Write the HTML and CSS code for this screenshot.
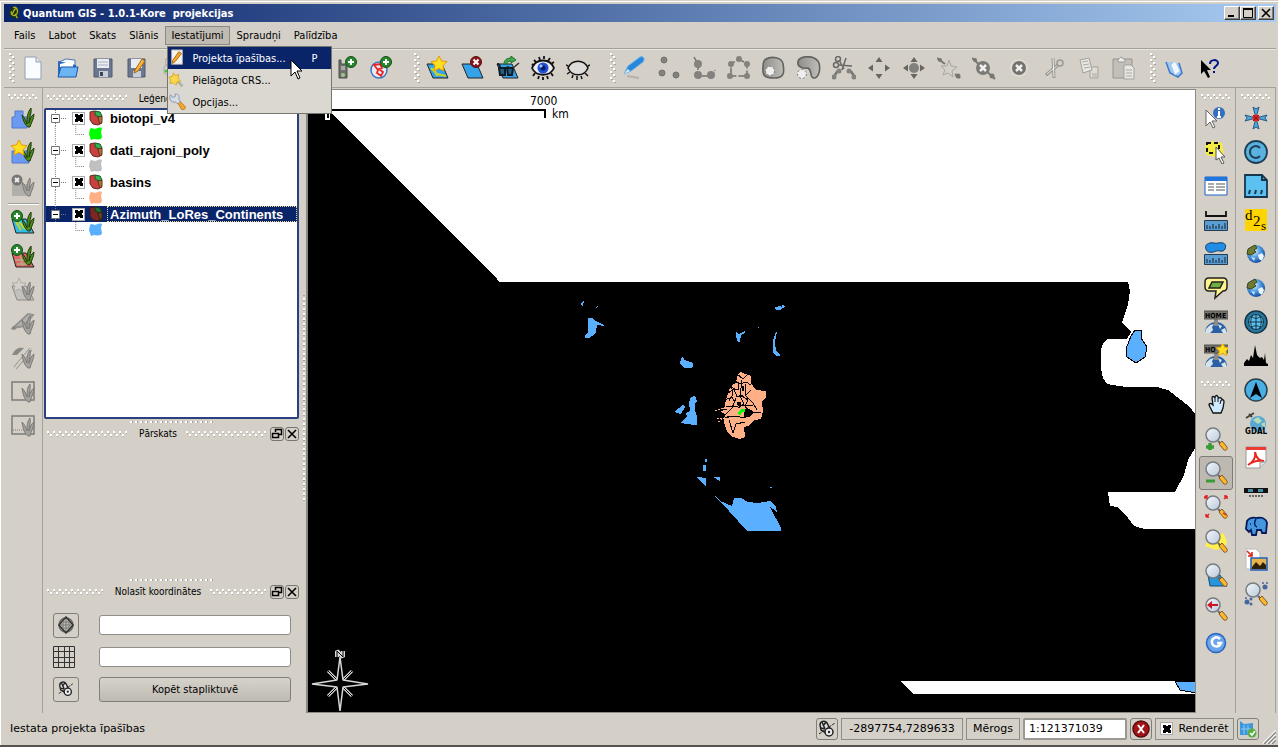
FILE: index.html
```html
<!DOCTYPE html>
<html lang="lv">

<head>
  <meta charset="UTF-8" />
  <meta name="viewport" content="width=device-width, initial-scale=1.0" />
  <title>Quantum GIS - 1.0.1-Kore projekcijas</title>
  <link rel="stylesheet" href="styles.css">
</head>

<body>
  <!-- shared icon parts -->
  <svg class="sprite" aria-hidden="true">
    <defs>
      <linearGradient id="gLens" x1="0" y1="0" x2="1" y2="1">
        <stop offset="0" stop-color="#f4f8fc" /><stop offset="1" stop-color="#b9c9da" />
      </linearGradient>
      <linearGradient id="gGray" x1="0" y1="0" x2="1" y2="0">
        <stop offset="0" stop-color="#8e8d89" /><stop offset="1" stop-color="#c0beb9" />
      </linearGradient>
      <radialGradient id="gEarth" cx="0.4" cy="0.35" r="0.7">
        <stop offset="0" stop-color="#d8f0ff" /><stop offset="0.5" stop-color="#4c9be0" /><stop offset="1" stop-color="#123f9c" />
      </radialGradient>
    </defs>
    <symbol id="grass" viewBox="0 0 24 24">
      <path d="M17 20C13 17 12 12 11 8c3 3 4 6 5 9 0-6 0-11 4-16 1 5-2 10-2 15 1-4 2-7 5-9 0 5-3 9-4 13z" fill="#4f8a1c" stroke="#1d3a0a" />
    </symbol>
    <symbol id="grass-off" viewBox="0 0 24 24">
      <path d="M17 22C13 19 12 14 11 8c3 3 4 6 5 9 0-6 0-9 3-13 1 5-1 8-1 13 1-4 2-7 5-9 0 5-3 9-4 14z" fill="#a3a29e" stroke="#7b7a77" />
    </symbol>
    <symbol id="lens" viewBox="0 0 24 24">
      <path d="M14 14l3 3" stroke="#666" stroke-width="2" />
      <path d="M15 17l3-3 5 6c1 2-1 4-3 3z" fill="#ffb52e" stroke="#7c5a20" />
      <circle cx="9" cy="8" r="7" fill="url(#gLens)" stroke="#777b82" stroke-width="1.5" />
    </symbol>
    <symbol id="plus" viewBox="0 0 24 24">
      <circle cx="6" cy="6" r="5.5" fill="#25882b" stroke="#154e18" />
      <path d="M6 3v6M3 6h6" stroke="#fff" stroke-width="2" />
    </symbol>
    <symbol id="star" viewBox="0 0 24 24">
      <path d="M8 0l2.500 5 5.500.6-4 4 1 5.400-5-2.600L3 15l1-5.400-4-4L5.500 5z" fill="#ffdf1f" stroke="#e59b00" />
    </symbol>
    <symbol id="map-tile" viewBox="0 0 24 24">
      <path d="M1 8h15l6 14H7z" fill="#35a2ea" stroke="#222" />
    </symbol>
    <symbol id="globe" viewBox="0 0 24 24">
      <circle cx="12" cy="12" r="9" fill="url(#gEarth)" />
      <path d="M4 7l7-4 2 3-3 2 2 2-5 3-4-1z" fill="#6d7c32" stroke="#3a4418" />
      <path d="M14 13l4-2 2 3-2 5-3-2z" fill="#eaf5fb" /><path d="M7 15l4 1-1 3z" fill="#cfe6f8" />
    </symbol>
    <symbol id="home" viewBox="0 0 24 24">
      <path d="M1 23c0-7 5-11 11-11s11 4 11 11z" fill="#2b5fa5" />
      <path d="M2 19l4-4 4-1-2 3 1 3-3 3H1zM14 14l4 2-2 3zM17 20l4-2 2 5h-4z" fill="#d5e3ea" />
      <path d="M10 8h4v8h-4z" fill="#8a8a88" />
      <path d="M0 1h24v8H0z" fill="#73736f" stroke="#55554f" />
    </symbol>
    <symbol id="ruler" viewBox="0 0 24 24">
      <path d="M.5 12.500h23v10H.5z" fill="#5a9dd0" stroke="#263a52" />
      <path d="M3 21v-4M6 21v-3M9 21v-5M12 21v-3M15 21v-5M18 21v-3M21 21v-6" stroke="#102338" />
    </symbol>
    <symbol id="mouse" viewBox="0 0 20 20">
      <path d="M3 6c0-4 5-5 7-2l3 6-4 4-5-3z" fill="#ddd" stroke="#222" stroke-width="1.500" />
      <path d="M5 3l3 7M9 3l-3 4M4 9l4 1" stroke="#222" stroke-width="1.500" fill="none" />
      <path d="M2 15L18 4" stroke="#222" stroke-dasharray="3 1" />
      <circle cx="12" cy="13" r="4" fill="#eee" stroke="#222" stroke-width="1.500" /><circle cx="12" cy="13" r="1.200" fill="#222" />
    </symbol>
    <symbol id="layer" viewBox="0 0 16 16">
      <path d="M2 2l4-1 3 1 2 3-1 3 3 2 1 3-4 2-5-1-3-4z" fill="#c9403d" stroke="#6e2020" />
      <path d="M7 1l5 1 2 4-3 1-4-2z" fill="#2fb351" stroke="#1b5a2b" /><path d="M10 7l4-1v6l-2 2-1-3z" fill="#b5733b" stroke="#5c3517" />
    </symbol>
    <symbol id="patch" viewBox="0 0 14 14">
      <path d="M1 2c2-2 3 0 5 0 3-1 5-2 7-1l-1 4 1 5-1 2-4 .5-3-.5-3 1-1-3-1-3z" />
    </symbol>
    <symbol id="grow" viewBox="0 0 24 24">
      <path d="M12 1l3.500 5h-7zM12 23l3.500-5h-7zM1 12l5-3.500v7zM23 12l-5-3.500v7z" fill="#666562" />
    </symbol>
    <symbol id="branch" viewBox="0 0 26 16">
      <path d="M9.500 0v4M9.500 13v3M15 8.500h5" stroke="#777" stroke-dasharray="1 1" />
      <path d="M5.500 4.500h8v8h-8z" fill="#fff" stroke="#777" /><path d="M7 8.500h5" stroke="#000" />
    </symbol>
    <symbol id="twig" viewBox="0 0 42 16">
      <path d="M9.500 0v16M30.500 0v8.500h9" fill="none" stroke="#777" stroke-dasharray="1 1" />
    </symbol>
    <symbol id="twig-last" viewBox="0 0 42 16">
      <path d="M30.500 0v8.500h9" fill="none" stroke="#777" stroke-dasharray="1 1" />
    </symbol>
  </svg>

  <div class="window">
    <header class="titlebar">
      <svg class="app-icon" viewBox="0 0 16 16"><path d="M8 1c5 0 6 4 5 8l-2 3 2 3-5-2C3 13 3 9 3 7c0-3 2-6 5-6z" fill="#17340d" /><path d="M7 2c3-2 5 1 5 4s-2 5-4 5-4-2-3-5M9 9l3 5M11 3c-4 0-3 4-5 6" fill="none" stroke="#b4b51c" stroke-width="1.500" /></svg>
      <h1>Quantum GIS - 1.0.1-Kore&nbsp; projekcijas</h1>
      <div class="window-buttons">
        <button aria-label="Minimizēt"><svg viewBox="0 0 12 10"><path d="M2 8h6" stroke="#000" stroke-width="2" /></svg></button>
        <button aria-label="Maksimizēt"><svg viewBox="0 0 12 10"><path d="M1.500 1v8.500h9V1" fill="none" stroke="#000" /><path d="M1 1h10" stroke="#000" stroke-width="2" /></svg></button>
        <button class="close" aria-label="Aizvērt"><svg viewBox="0 0 12 10"><path d="M2 1l8 8M10 1L2 9" stroke="#000" stroke-width="1.600" /></svg></button>
      </div>
    </header>

    <nav class="menubar">
      <button>Fails</button>
      <button>Labot</button>
      <button>Skats</button>
      <button>Slānis</button>
      <div class="menu-holder">
        <button class="open">Iestatījumi</button>
        <div class="menu">
          <button class="menu-item active">
            <svg viewBox="0 0 20 20"><path d="M4 1h12v16H4z" fill="#f5f5f2" stroke="#aaa" /><path d="M5 13l7-10 3 2-7 9-3 2z" fill="#f9a626" stroke="#a66710" /></svg>
            <span>Projekta īpašības...</span><kbd>P</kbd>
          </button>
          <button class="menu-item">
            <svg viewBox="0 0 20 20"><path d="M8 8l8 9" stroke="#b0aea6" stroke-width="3" /><path d="M6 2l2 3 4-1-1 4 3 3-4 1-1 4-3-3-4 1 1-4-2-3 4-1z" fill="#fbd84a" stroke="#d9a520" /></svg>
            <span>Pielāgota CRS...</span>
          </button>
          <button class="menu-item">
            <svg viewBox="0 0 20 20"><path d="M11 11l2-2 6 6c1 3-2 4-4 3z" fill="#f8a52b" stroke="#b97410" /><path d="M3 2l2 3 3-1V1c4 0 5 3 4 6l2 2-3 3-3-2c-4 1-6-2-6-6z" fill="#d5dde6" stroke="#8390a0" /></svg>
            <span>Opcijas...</span>
          </button>
        </div>
        <svg class="pointer" viewBox="0 0 13 21"><path d="M1 1v16l4-4 3 7 2-1-3-7h5z" fill="#fff" stroke="#000" /></svg>
      </div>
      <button>Spraudņi</button>
      <button>Palīdzība</button>
    </nav>

    <div class="toolbar">
      <div class="grip first"></div>
      <button aria-label="Jauns"><svg viewBox="0 0 24 24"><path d="M4 1h11l5 5v17H4z" fill="#fafcff" stroke="#8ea0b8" /><path d="M15 1v5h5" fill="#dbe6f2" stroke="#8ea0b8" /></svg></button>
      <button aria-label="Atvērt"><svg viewBox="0 0 24 24"><path d="M3 6l7-3 9 1v7H3z" fill="#f4fbff" stroke="#4a78b8" /><path d="M2 5v16h18V9" fill="#2a67bd" /><path d="M4 8l13-3v6H4z" fill="#fff" /><path d="M2 21L5 11h17l-2 10z" fill="#6db4f3" stroke="#1858aa" /></svg></button>
      <button aria-label="Saglabāt"><svg viewBox="0 0 24 24"><path d="M3 3h18v18H3z" fill="#6b7890" stroke="#4c5870" /><path d="M6 3h12v9H6z" fill="#e9edf2" /><path d="M7 6h10M7 9h10" stroke="#a9b2bf" /><path d="M8 15h9v6H8z" fill="#c9cfd8" /><path d="M9 16h3v4H9z" fill="#39445a" /></svg></button>
      <button aria-label="Saglabāt kā"><svg viewBox="0 0 24 24"><path d="M2 3h17v18H2z" fill="#6b7890" stroke="#4c5870" /><path d="M5 3h11v9H5z" fill="#e9edf2" /><path d="M7 15h8v6H7z" fill="#c9cfd8" /><path d="M9 14l7-11 3 2-7 10-4 2z" fill="#fbb33b" stroke="#a66710" /></svg></button>
      <button aria-label="Drukāt"><svg viewBox="0 0 24 24"><path d="M5 3h14v6H5z" fill="#fff" stroke="#999" /><path d="M3 11l3-2h16v10H6l-3-2z" fill="#cfcfcf" stroke="#aaa" /><circle cx="5" cy="15" r="1.500" fill="#3c3" /></svg></button>
      <div class="hidden-gap"></div>
      <div class="grip"></div>
      <button aria-label="Pievienot vektoru slāni"><svg viewBox="0 0 24 24"><use href="#map-tile" /></svg></button>
      <button aria-label="Pievienot rastra slāni"><svg viewBox="0 0 24 24"><use href="#map-tile" /></svg></button>
      <button aria-label="Pievienot PostGIS slāni"><svg viewBox="0 0 24 24"><use href="#map-tile" /></svg></button>
      <button aria-label="GPS rīki"><svg viewBox="0 0 24 24"><path d="M4 4h2v4h6v14H4z" fill="#6f706c" stroke="#4b4c49" /><path d="M6 10h4v4H6z" fill="#a8aaa5" /><circle cx="8" cy="19" r="2" fill="#9fc98c" /><use href="#plus" x="10" /></svg></button>
      <button aria-label="WMS slānis"><svg viewBox="0 0 24 24"><circle cx="9" cy="14" r="8" fill="#e7eaf0" stroke="#3777c4" stroke-width="1.500" /><path d="M4 9l6-1 2 4-3 1 4 3-2 4-4-3 1-3z" fill="none" stroke="#e22" stroke-width="1.800" /><use href="#plus" x="10" /></svg></button>
      <div class="grip"></div>
      <button aria-label="Jauns vektoru slānis"><svg viewBox="0 0 24 24"><use href="#map-tile" /><path d="M5 12l6 6 9 2M8 12l3 8" stroke="#c5d629" stroke-width="2" fill="none" /><use href="#star" x="5" /></svg></button>
      <button aria-label="Noņemt slāni"><svg viewBox="0 0 24 24"><use href="#map-tile" /><circle cx="15" cy="6" r="5.500" fill="#8d1518" stroke="#521012" /><path d="M12.500 3.500l5 5M17.500 3.500l-5 5" stroke="#fff" stroke-width="2" /></svg></button>
      <button aria-label="Pārskata karte"><svg viewBox="0 0 24 24"><use href="#map-tile" /><path d="M8 8c0-4 3-6 7-6V0l5 4-5 3V5c-3 0-4 1-4 3z" fill="#3bab4c" stroke="#276b31" /><path d="M1 8c2 0 3 2 3 4h6l3-1" stroke="#18242f" stroke-width="2" fill="none" /><path d="M3 12h6v7H4zM11 12h6l-1 7h-4z" fill="#205e86" stroke="#111b24" stroke-width="2" /><path d="M17 12l6-5" stroke="#333" stroke-width="1.500" /></svg></button>
      <button aria-label="Rādīt visus"><svg viewBox="0 0 24 24"><path d="M5 6L3 4M9 4L8 1M13 3V0M17 5l2-3M20 8l3-2M4 17l-2 3M8 20l-1 3M12 21v3M16 20l1 3M20 17l2 3M1 8l2 2" stroke="#111" stroke-width="1.800" /><path d="M1 12C5 2 19 2 23 12 19 21 5 21 1 12z" fill="#ececec" stroke="#111" stroke-width="1.800" /><circle cx="12" cy="12" r="5.500" fill="#1c50d4" /><circle cx="12" cy="12" r="2.500" fill="#041a66" /><circle cx="10" cy="10" r="1.500" fill="#b3ccff" /></svg></button>
      <button aria-label="Paslēpt visus"><svg viewBox="0 0 24 24"><path d="M4 16l-3 2M7 19l-1 3M11 20v4M15 20l1 3M19 17l3 3M2 10L0 9M22 10l2-1" stroke="#111" stroke-width="1.500" /><path d="M2 12C6 3 18 3 22 12c-4 9-16 9-20 0z" fill="#dedcd8" stroke="#111" stroke-width="1.500" /></svg></button>
      <div class="grip"></div>
      <button aria-label="Rediģēt"><svg viewBox="0 0 24 24"><path d="M5 20l12 2" stroke="#b5b2ab" stroke-width="2" /><path d="M2 18l4-8L18 1c4-1 5 2 3 5L9 15z" fill="#2987da" stroke="#5fb1f0" /><path d="M2 18l4-5 2 2z" fill="#e8edf2" /></svg></button>
      <button aria-label="Punkts" disabled><svg viewBox="0 0 24 24"><g fill="#83827e" stroke="#72716e"><circle cx="7" cy="4" r="3" /><circle cx="5" cy="17" r="3" /><circle cx="19" cy="19" r="3" /></g></svg></button>
      <button aria-label="Līnija" disabled><svg viewBox="0 0 24 24"><path d="M2 1l4 7v12h14l3-6" fill="none" stroke="#72716e" stroke-width="1.500" stroke-dasharray="6 2" /><g fill="#83827e"><circle cx="6" cy="8" r="4" /><circle cx="6" cy="19" r="4" /><circle cx="19" cy="19" r="4" /></g></svg></button>
      <button aria-label="Poligons" disabled><svg viewBox="0 0 24 24"><path d="M12 3l8 5v12H4V8z" fill="none" stroke="#72716e" stroke-width="1.500" stroke-dasharray="6 2" /><g fill="#83827e"><circle cx="12" cy="3" r="3" /><circle cx="20" cy="8" r="3" /><circle cx="4" cy="8" r="3" /><circle cx="3" cy="20" r="3" /><circle cx="20" cy="20" r="3" /></g></svg></button>
      <button aria-label="Gredzens" disabled><svg viewBox="0 0 24 24"><path d="M4 3c5-3 16-2 17 5 2 10 0 14-9 14S0 20 1 11c0-4 1-7 3-8z" fill="url(#gGray)" stroke="#63625f" stroke-width="1.600" /><circle cx="8" cy="15" r="4.500" fill="#eee" stroke="#777" stroke-dasharray="2 2" /></svg></button>
      <button aria-label="Sala" disabled><svg viewBox="0 0 24 24"><path d="M4 2c7-3 15-1 18 5 2 8-1 15-5 15-5 0-1-7-6-10C6 13 0 11 1 6c0-2 1-3 3-4z" fill="url(#gGray)" stroke="#63625f" stroke-width="1.600" /><circle cx="5" cy="18" r="4.500" fill="#eee" stroke="#777" stroke-dasharray="2 2" /></svg></button>
      <button aria-label="Sadalīt" disabled><svg viewBox="0 0 24 24"><path d="M2 22c1-4 3-7 6-8M22 21c-1-4-3-6-6-7" fill="none" stroke="#777673" stroke-width="2.500" /><circle cx="2" cy="21" r="2.500" fill="#83827e" /><circle cx="7" cy="15" r="2.500" fill="#83827e" /><circle cx="17" cy="15" r="2.500" fill="#83827e" /><circle cx="22" cy="21" r="2.500" fill="#83827e" /><path d="M7 4l5 9M6 9l14 1M10 14l4-12" stroke="#696865" stroke-width="1.500" /><circle cx="6" cy="3" r="2.500" fill="none" stroke="#696865" stroke-width="1.500" /><circle cx="4" cy="9" r="2.500" fill="none" stroke="#696865" stroke-width="1.500" /></svg></button>
      <button aria-label="Pārvietot" disabled><svg viewBox="0 0 24 24"><use href="#grow" /></svg></button>
      <button aria-label="Pārvietot virsotni" disabled><svg viewBox="0 0 24 24"><use href="#grow" /><circle cx="12" cy="12" r="5" fill="#81807c" /></svg></button>
      <button aria-label="Pievienot virsotni" disabled><svg viewBox="0 0 24 24"><path d="M0 2l8 6M18 18l5 4" stroke="#777673" stroke-width="2" /><circle cx="3" cy="4" r="2" fill="#777673" /><circle cx="21" cy="20" r="2.500" fill="#777673" /><path d="M12 4l2 6 6 1-5 4 1 6-5-4-5 2 2-5-4-4h6z" fill="#d4d0c9" stroke="#a8a6a1" /></svg></button>
      <button aria-label="Dzēst virsotni" disabled><svg viewBox="0 0 24 24"><path d="M0 2l23 21" stroke="#777673" stroke-width="2" /><circle cx="3" cy="4" r="2" fill="#777673" /><circle cx="20" cy="20" r="2.500" fill="#777673" /><circle cx="11" cy="12" r="7" fill="#7b7a76" /><path d="M8 9l6 6M14 9l-6 6" stroke="#f0f0ee" stroke-width="2.500" /></svg></button>
      <button aria-label="Dzēst" disabled><svg viewBox="0 0 24 24"><circle cx="12" cy="12" r="9" fill="#dedbd4" /><circle cx="12" cy="12" r="7" fill="#73726e" /><path d="M9 9l6 6M15 9l-6 6" stroke="#f0f0ee" stroke-width="2.500" /></svg></button>
      <button aria-label="Izgriezt" disabled><svg viewBox="0 0 24 24"><path d="M11 2l1 20M16 9L4 19" stroke="#989690" stroke-width="3" /><path d="M11 2l1 19M16 9L5 18" stroke="#efede8" /><circle cx="18" cy="7" r="3" fill="none" stroke="#9c9a95" stroke-width="1.500" /></svg></button>
      <button aria-label="Kopēt" disabled><svg viewBox="0 0 24 24"><path d="M13 11h8v11h-8z" fill="#dfdcd6" stroke="#a3a19b" /><path d="M3 4l9-2 3 12-9 3z" fill="#e9e7e1" stroke="#a3a19b" /><path d="M5 6l6-1M6 9l6-1M7 12l6-1M15 18h5M15 20h5" stroke="#aaa8a2" /></svg></button>
      <button aria-label="Ielīmēt" disabled><svg viewBox="0 0 24 24"><path d="M1 3h19v19H1z" fill="#c2bfb9" stroke="#96948f" /><path d="M6 4l3-3 4 3v2H6z" fill="#eee" stroke="#999" /><path d="M12 9h7l3 3v11H12z" fill="#e9e7e1" stroke="#a3a19b" /><path d="M14 14h6M14 17h6M14 20h6" stroke="#aaa8a2" /></svg></button>
      <div class="grip short"></div>
      <button class="book" aria-label="Palīdzība"><svg viewBox="0 0 24 24"><path d="M4 6l4 11 8 4 4-4-3-10" fill="#9cc6f1" stroke="#3b78cf" stroke-width="1.500" /><path d="M9 9l4-4 5 10-5 4z" fill="#f1f7fd" stroke="#b8d1ea" /></svg></button>
      <button aria-label="Kas šis ir"><svg viewBox="0 0 24 24"><path d="M4 4v14l3-3 4 7 2-1-3-7h4z" fill="#000" /><path d="M13 8c0-5 8-5 8-1 0 3-4 3-4 6M17 15v2" stroke="#001489" stroke-width="2" fill="none" /></svg></button>
    </div>

    <main class="workspace">
      <div class="side-toolbar left">
        <div class="grip-h"></div>
        <button aria-label="Jauns GRASS mapset"><svg viewBox="0 0 24 24"><path d="M4 5h8v6h4v11H1V11h3z" fill="#6c9af0" stroke="#5079cc" /><use href="#grass" y="1" /></svg></button>
        <button aria-label="Atvērt mapset"><svg viewBox="0 0 24 24"><path d="M1 11h17v12H1z" fill="#6c9af0" stroke="#5079cc" /><use href="#grass" y="1" /><use href="#star" /></svg></button>
        <button aria-label="Aizvērt mapset" disabled><svg viewBox="0 0 24 24"><path d="M1 10h18v12H1z" fill="#b1afaa" /><use href="#grass-off" /><circle cx="6" cy="6" r="5.500" fill="#777673" /><path d="M4 4l4 4M8 4L4 8" stroke="#eee" stroke-width="2" /></svg></button>
        <hr>
        <button aria-label="Pievienot GRASS vektoru"><svg viewBox="0 0 24 24"><path d="M1 9h14l8 14H5z" fill="#35bce4" stroke="#222" /><path d="M5 12l5 8M8 12l6 7" stroke="#c5d629" stroke-width="2" /><use href="#grass" y="1" /><use href="#plus" /></svg></button>
        <button aria-label="Pievienot GRASS rastru"><svg viewBox="0 0 24 24"><path d="M1 9h14l8 14H5z" fill="#e8646b" stroke="#222" /><path d="M4 16h14M6 20h14M9 11l3 11" stroke="#b6a27e" stroke-width="2" /><use href="#grass" y="1" /><use href="#plus" /></svg></button>
        <button aria-label="Jauns GRASS vektors" disabled><svg viewBox="0 0 24 24"><path d="M1 8h14l8 14H6z" fill="#c3c1bc" stroke="#8b8a86" /><path d="M8 0l2 5h5l-3 4 1 5-5-3-5 2 1-5-3-3h5z" fill="#d4d1ca" stroke="#b0aea9" /><use href="#grass-off" /></svg></button>
        <button aria-label="Rediģēt GRASS" disabled><svg viewBox="0 0 24 24"><path d="M2 16L17 2l5 1-9 11z" fill="#b3b2ae" stroke="#94938f" stroke-width="2" /><circle cx="3" cy="16" r="2" fill="#888" /><use href="#grass-off" /></svg></button>
        <button aria-label="GRASS rīki" disabled><svg viewBox="0 0 24 24"><path d="M4 22L20 3" stroke="#989793" stroke-width="4" /><path d="M4 22L20 3" stroke="#d6d3cd" stroke-width="2" /><path d="M1 9c3-6 6-8 12-7L6 9z" fill="#8a8985" /><use href="#grass-off" /></svg></button>
        <button aria-label="GRASS reģions" disabled><svg viewBox="0 0 24 24"><path d="M1 2h22v18H1z" fill="none" stroke="#7c7b78" stroke-width="1.500" /><use href="#grass-off" /></svg></button>
        <button aria-label="Rediģēt reģionu" disabled><svg viewBox="0 0 24 24"><path d="M1 2h22v18H1z" fill="none" stroke="#7c7b78" stroke-width="1.500" /><path d="M2 16h20" stroke="#7c7b78" stroke-dasharray="1 1" /><use href="#grass-off" /></svg></button>
      </div>

      <aside class="docks">
        <section class="dock legend">
          <div class="dock-title"><i class="grip-h"></i><h2>Leģenda</h2><i class="grip-h"></i>
            <button aria-label="Atdalīt"><svg viewBox="0 0 12 12"><path d="M4.500 4V1.500h6v5H8M1.500 5.500h6v4h-6z" fill="none" stroke="#000" stroke-width="1.500" /></svg></button>
            <button aria-label="Aizvērt"><svg viewBox="0 0 12 12"><path d="M2 2l8 8M10 2l-8 8" stroke="#000" stroke-width="1.600" /></svg></button>
          </div>
          <ul class="tree">
            <li class="row"><svg class="branch"><use href="#branch" /></svg><input type="checkbox" id="l1" checked><svg class="layer"><use href="#layer" /></svg><label for="l1">biotopi_v4</label></li>
            <li class="row"><svg class="twig"><use href="#twig" /></svg><svg class="patch green"><use href="#patch" /></svg></li>
            <li class="row"><svg class="branch"><use href="#branch" /></svg><input type="checkbox" id="l2" checked><svg class="layer"><use href="#layer" /></svg><label for="l2">dati_rajoni_poly</label></li>
            <li class="row"><svg class="twig"><use href="#twig" /></svg><svg class="patch gray"><use href="#patch" /></svg></li>
            <li class="row"><svg class="branch"><use href="#branch" /></svg><input type="checkbox" id="l3" checked><svg class="layer"><use href="#layer" /></svg><label for="l3">basins</label></li>
            <li class="row"><svg class="twig"><use href="#twig" /></svg><svg class="patch peach"><use href="#patch" /></svg></li>
            <li class="row selected"><svg class="branch"><use href="#branch" /></svg><input type="checkbox" id="l4" checked><svg class="layer"><use href="#layer" /></svg><label for="l4">Azimuth_LoRes_Continents</label></li>
            <li class="row"><svg class="twig"><use href="#twig-last" /></svg><svg class="patch blue"><use href="#patch" /></svg></li>
          </ul>
        </section>
        <div class="splitter"></div>
        <section class="dock overview">
          <div class="dock-title"><i class="grip-h"></i><h2>Pārskats</h2><i class="grip-h"></i>
            <button aria-label="Atdalīt"><svg viewBox="0 0 12 12"><path d="M4.500 4V1.500h6v5H8M1.500 5.500h6v4h-6z" fill="none" stroke="#000" stroke-width="1.500" /></svg></button>
            <button aria-label="Aizvērt"><svg viewBox="0 0 12 12"><path d="M2 2l8 8M10 2l-8 8" stroke="#000" stroke-width="1.600" /></svg></button>
          </div>
        </section>
        <div class="splitter"></div>
        <section class="dock coords">
          <div class="dock-title"><i class="grip-h"></i><h2>Nolasīt koordinātes</h2><i class="grip-h"></i>
            <button aria-label="Atdalīt"><svg viewBox="0 0 12 12"><path d="M4.500 4V1.500h6v5H8M1.500 5.500h6v4h-6z" fill="none" stroke="#000" stroke-width="1.500" /></svg></button>
            <button aria-label="Aizvērt"><svg viewBox="0 0 12 12"><path d="M2 2l8 8M10 2l-8 8" stroke="#000" stroke-width="1.600" /></svg></button>
          </div>
          <div class="coord-form">
            <button class="square" aria-label="CRS"><svg viewBox="0 0 18 18"><circle cx="9" cy="9" r="7" fill="#c2bfb8" stroke="#666" stroke-width="1.500" /><path d="M9 1l7 8-7 8-7-8z" fill="none" stroke="#333" stroke-width="1.500" /><path d="M6 6h6v6H6zM9 3v12M3 9h12" fill="none" stroke="#777" /></svg></button>
            <input type="text" aria-label="Ģeogrāfiskās koordinātes">
            <svg class="grid-icon" viewBox="0 0 22 22"><path d="M.5.5h21v21H.5zM5.500 0v22M11.500 0v22M16.500 0v22M0 5.500h22M0 11.500h22M0 16.500h22" fill="none" stroke="#333" /></svg>
            <input type="text" aria-label="Kartes koordinātes">
            <button class="square" aria-label="Sekot pelei"><svg viewBox="0 0 20 20"><use href="#mouse" /></svg></button>
            <button class="copy">Kopēt stapliktuvē</button>
          </div>
        </section>
      </aside>

      <div class="v-splitter"></div>

      <div class="map">
        <svg viewBox="308 90 887 622" preserveAspectRatio="xMinYMin slice" shape-rendering="crispEdges">
          <path fill="#000" d="M308 89L500 282H1128L1130 291L1128 305L1122 322L1131 332L1127 339H1107L1103 343L1101 350V368L1103 378L1107 384L1126 387H1157L1168 390L1190 407L1195 414V448L1188 460L1184 475L1175 492H1108L1110 506L1118 507L1128 518L1134 526L1145 529H1300V720H308z" />
          <path fill="#fff" d="M900 681h400v13H913z" />
          <path fill="#5ab0ff" stroke="#000" d="M1175 681l5 9 16 3v-12z" />
          <path fill="#5ab0ff" stroke="#000" d="M1135 330h6v8l6 9-2 10-9 6-9-6-1-8 5-13z" />
          <!-- lakes -->
          <g fill="#5ab0ff">
            <path d="M588 318h4l4 3 8 4v1l-7-1-1 7-4 4-3 2h-4v-3l3-3zM581 303l3-3v2l-2 5zM595 308l4-4-2 4zM774 308l5-2 3 1 1-3 2 3-5 3h-4zM736 332l3 2 6-3v2l-4 2-1 7h-2l-2-5zM776 332l-3 9v11l3 4h4v-2l-4-3-1-9 2-10zM681 359l2-3 1 4 4 1 5 2v4l-3 1h-6l-4-4zM695 396l-4 1-2 5 1 9-5 3 3 2-8 7 14 2h3v-9l-2-5v-7l2-3zM674 412l9-7 2 2-4 7zM705 459h2v3h-2zM703 465h3v6h-3zM697 477l9 1v9zM713 477h7v4zM715 496l6 6-3-2zM770 487h2v1h-2zM758 327h1v1h-1z" />
            <path d="M720 501l12 5 2-8h7l7 4 10 1 12-2 6 6 1 6-4-4-3-2 11 21v3h-34z" />
          </g>
          <!-- basins -->
          <path fill="#ffaf85" d="M740 372l3 1 8 3v7l5 7 10 1v6l-4 5 1 9-2 8-7 1-4 5-6 2 1 10-6 2-8-3-4-4-3-10 1-8-4-2 4-6 1-7 4-11 5-8z" />
          <path fill="none" stroke="#000" d="M737 374l6 5 4-4M733 380l7 4 6-2 5 3M730 387l8 3 1-8M728 393l6-4 3 8 5-2 6 6M725 400l7-3 3 6M736 398l-4 10-7 7M742 380l-2 16 4 8-6 4M746 384l-1 11 8 8 4 7M751 390l-6 6M726 407l12-1 15-1M724 418l10-2 11 2 8-6 8 1M729 420l4 13 3-9 9-2M731 384l2 10-4 7M740 396l8 3-3 8 8 5M716 421l12-5 10 1M719 411l8-2" />
          <path fill="#000" d="M733 374l4 4-1 5-5 3zM744 409h5l4 4-4 4h-5zM742 386h2v5h-2zM737 402h4v3h-4z" />
          <path fill="none" stroke="#ffaf85" stroke-dasharray="2 1" d="M715 411l12-4M717 419l11-1M718 422l9-6" />
          <path fill="#0f0" d="M738 413l3-4h4v3h-3l-2 4z" />
          <!-- scale bar -->
          <path fill="none" stroke="#000" stroke-width="2" d="M328 118v-8h217v8" />
          <path fill="#fff" stroke="#fff" d="M325.500 113.500h4v6h-4z" /><path d="M327 113h2v5h-2z" fill="#000" />
          <text x="530" y="105">7000</text>
          <text x="552" y="118">km</text>
          <!-- north arrow -->
          <g shape-rendering="auto" fill="#000" stroke="#d8d8d8" stroke-linejoin="bevel">
            <path d="M328 671l9 9M352 671l-9 9M328 696l9-9M352 696l-9-9" stroke-width="3" />
            <path d="M328 671l9 9M352 671l-9 9M328 696l9-9M352 696l-9-9" stroke="#000" />
            <path d="M340 657l3 23 25 4-25 3-3 24-3-24-25-3 25-4z" stroke-width="1.500" />
            <path d="M337 657v-6l6 6v-6" stroke-width="4" fill="none" /><path d="M337 657v-6l6 6v-6" stroke="#000" fill="none" />
          </g>
        </svg>
      </div>

      <div class="side-toolbar right">
        <div class="grip-h"></div>
        <button aria-label="Identificēt"><svg viewBox="0 0 24 24"><circle cx="15" cy="7" r="6" fill="#356fc1" /><path d="M15 5v6M15 2v2M13 11h4" stroke="#fff" stroke-width="2" /><path d="M2 4v16l4-4 3 6 2-1-3-6h5z" fill="#fff" stroke="#666" /></svg></button>
        <button aria-label="Atlasīt"><svg viewBox="0 0 24 24"><path d="M1 5l7-4 10 2 2 11-8 3L2 15z" fill="#f5ec43" /><path d="M3 3h12v10H3z" fill="none" stroke="#111" stroke-width="2" stroke-dasharray="4 3" /><path d="M12 7v13l3-2 3 6 2-1-3-6h4z" fill="#fff" stroke="#555" /></svg></button>
        <button aria-label="Atribūtu tabula"><svg viewBox="0 0 24 24"><path d="M1 3h22v18H1z" fill="#fff" stroke="#1e63c2" /><path d="M1 3h22v4H1z" fill="#2474de" /><path d="M4 10h6M4 13h6M4 16h6M12 10h9M12 13h9M12 16h9" stroke="#555" stroke-width="1.200" /></svg></button>
        <button aria-label="Mērīt līniju"><svg viewBox="0 0 24 24"><path d="M2 3v5h20V3" fill="none" stroke="#111" stroke-width="1.800" /><use href="#ruler" /></svg></button>
        <button aria-label="Mērīt laukumu"><svg viewBox="0 0 24 24"><path d="M6 1c3-1 5 1 8 0 6-1 9 1 7 6-2 4-6 1-9 2-4 2-9 2-10-2-1-3 0-5 4-6z" fill="#228de6" stroke="#123d66" /><use href="#ruler" /></svg></button>
        <button aria-label="Kartes padomi"><svg viewBox="0 0 24 24"><path d="M5 2h14c3 0 4 1 4 4v5c0 3-1 4-4 4l-8 7 1-7H5c-3 0-4-1-4-4V6c0-3 1-4 4-4z" fill="#fff38c" stroke="#222" stroke-width="1.500" /><path d="M8 6h11l-3 6H5z" fill="#6eae43" stroke="#222" stroke-width="1.500" /></svg></button>
        <button aria-label="Jauna grāmatzīme"><svg viewBox="0 0 24 24"><use href="#home" /><text class="home-text" x="1" y="8">HOME</text></svg></button>
        <button aria-label="Grāmatzīmes"><svg viewBox="0 0 24 24"><use href="#home" /><text class="home-text" x="1" y="8">HO</text><use href="#star" x="12" y="-1" width="20" height="20" /></svg></button>
        <div class="grip-h mid"></div>
        <button aria-label="Pārbīdīt"><svg viewBox="0 0 24 24"><path d="M9 20L5 12c0-2 2-2 4 0L8 5c0-2 2-2 3 0V4c1-2 2-2 3 0l1 1c1-1 3 0 3 2 1-1 2 0 2 2l-1 6-2 5z" fill="#cfeaff" stroke="#111" stroke-width="1.300" /><path d="M11 5v4M14 5v4M17 7l-1 4" stroke="#111" /></svg></button>
        <button aria-label="Tuvināt"><svg viewBox="0 0 24 24"><use href="#lens" /><path d="M6 16v7M2 20h8" stroke="#389b35" stroke-width="3.500" /></svg></button>
        <button class="pressed" aria-label="Tālināt"><svg viewBox="0 0 24 24"><use href="#lens" /><path d="M2 20h9" stroke="#389b35" stroke-width="3" /></svg></button>
        <button aria-label="Rādīt visu"><svg viewBox="0 0 24 24"><use href="#lens" /><path d="M1 1l3 3M23 1l-3 3M2 22l3-3M22 20l-3-2M1 1h3M1 1v3M23 1h-3M23 1v3M2 22v-3M2 22h3" stroke="#e02020" stroke-width="1.500" /></svg></button>
        <button aria-label="Tuvināt atlasei"><svg viewBox="0 0 24 24"><path d="M8 3l12 2 3 8-3 6-8 2-11-4z" fill="#fff04c" /><use href="#lens" /></svg></button>
        <button aria-label="Tuvināt slānim"><svg viewBox="0 0 24 24"><path d="M4 12h12l7 11H6z" fill="#2695dc" stroke="#124c75" /><use href="#lens" /></svg></button>
        <button aria-label="Iepriekšējais skats"><svg viewBox="0 0 24 24"><use href="#lens" /><path d="M3 8l5-4v3h6v2H8v3z" fill="#cc1521" /></svg></button>
        <button aria-label="Atsvaidzināt"><svg viewBox="0 0 24 24"><circle cx="12" cy="12" r="9.500" fill="#6aa4ea" stroke="#2966be" stroke-width="1.500" /><path d="M16 8c-4-4-9 0-8 4s7 5 9 0h-4" fill="none" stroke="#fff" stroke-width="2.500" /></svg></button>
      </div>

      <div class="side-toolbar plugins">
        <div class="grip-h"></div>
        <button aria-label="Koordinātu ieguve"><svg viewBox="0 0 24 24"><path d="M12 12L9 1l3 2 3-2zM12 12l11-3-2 3 2 3zM12 12l3 11-3-2-3 2zM12 12L1 15l2-3-2-3z" fill="#4fa6df" stroke="#275c85" /><circle cx="12" cy="12" r="3.500" fill="#e32424" /><path d="M9 9l6 6M15 9l-6 6" stroke="#8a1111" /></svg></button>
        <button aria-label="Autortiesības"><svg viewBox="0 0 24 24"><circle cx="12" cy="12" r="11" fill="#5bb1df" stroke="#1d3f56" stroke-width="1.800" /><path d="M16 8c-4-4-10-1-10 4s6 8 10 4" fill="none" stroke="#1d3f56" stroke-width="2" /></svg></button>
        <button aria-label="Atdalīts teksts"><svg viewBox="0 0 24 24"><path d="M1 1h17l5 5v17H1z" fill="#5cc0f0" stroke="#17374c" stroke-width="1.800" /><path d="M18 1v5h5M6 16l-1 4M12 16l-1 4M18 16l-1 4" fill="none" stroke="#17374c" stroke-width="2" /></svg></button>
        <button aria-label="dxf2shp"><svg viewBox="0 0 24 24"><path d="M1 1h22v22H1z" fill="#ffd400" /><text class="dxf" x="1" y="12">d</text><text class="dxf" x="9" y="18">2</text><text class="dxf small" x="17" y="22">s</text></svg></button>
        <button aria-label="GeoRef"><svg viewBox="0 0 24 24"><use href="#globe" /></svg></button>
        <button aria-label="Globuss"><svg viewBox="0 0 24 24"><use href="#globe" /></svg></button>
        <button aria-label="Tīkls"><svg viewBox="0 0 24 24"><circle cx="12" cy="12" r="11" fill="#28789f" stroke="#173344" stroke-width="1.500" /><circle cx="12" cy="12" r="7.500" fill="#5bc1ef" stroke="#173344" /><path d="M4 12h16M12 4v16M7 6c3 3 7 3 10 0M7 18c3-3 7-3 10 0M9 5c-3 4-3 10 0 14M15 5c3 4 3 10 0 14" fill="none" stroke="#173344" /></svg></button>
        <button aria-label="Histogramma"><svg viewBox="0 0 24 24"><path d="M0 22v-3l3-4 2 2 2-6 2 3 2-13 2 10 3 3 2-1 2 3 1-7 1 10 2 1v2z" fill="#000" /></svg></button>
        <button aria-label="Ziemeļu bulta"><svg viewBox="0 0 24 24"><circle cx="12" cy="12" r="11" fill="#49afe4" stroke="#29414e" stroke-width="1.500" /><path d="M12 4l6 16-6-4-6 4z" fill="#000" /></svg></button>
        <button aria-label="GDAL"><svg viewBox="0 0 24 24"><circle cx="14" cy="12" r="8" fill="#58a8d2" /><path d="M9 8l5-3 4 4-4 3zM17 12l4-2v6z" fill="#b6dcb4" /><path d="M2 6l8-5M5 2l3 3" stroke="#444" stroke-width="2" /><text class="gdal" x="1" y="22">GDAL</text></svg></button>
        <button aria-label="PDF"><svg viewBox="0 0 24 24"><path d="M2 1h20v15l-6 6H2z" fill="#fff" stroke="#999" /><path d="M2 1h20v3H2z" fill="#ee3b32" /><path d="M4 19c5-3 8-8 7-13 1 5 4 9 9 9-6-1-11 0-16 4" fill="none" stroke="#e8281e" stroke-width="2" /><path d="M16 22v-6h6" fill="#ddd" stroke="#999" /></svg></button>
        <button aria-label="Mēroga josla"><svg viewBox="0 0 24 24"><path d="M0 8h24v5H0z" fill="#111" /><path d="M4 9h5v3H4zM14 9h5v3h-5z" fill="#448ba6" /><path d="M5 16h15" stroke="#666" stroke-width="2" stroke-dasharray="2 1" /></svg></button>
        <button aria-label="PostGIS SPIT"><svg viewBox="0 0 24 24"><path d="M3 7c2-3 6-4 10-3 5-1 9 1 10 5l-1 10h-4l-1-3h-4l-1 5H8l-1-5-2 2-3-3z" fill="#4496df" stroke="#05195b" stroke-width="1.800" /><path d="M12 5c-2 3-2 7 1 8M6 10h1" stroke="#05195b" stroke-width="1.500" fill="none" /></svg></button>
        <button aria-label="Ātrā druka"><svg viewBox="0 0 24 24"><path d="M2 1h10l4 4v16H2z" fill="#fff" stroke="#bbb" /><path d="M3 3l4 4M8 4v4H4" stroke="#d21" stroke-width="1.600" fill="none" /><path d="M7 10h16v12H7z" fill="#e8b54c" stroke="#215fc0" stroke-width="1.500" /><path d="M8 19l4-5 4 4 3-4 3 3v4H8z" fill="#2d2108" /></svg></button>
        <button aria-label="WFS"><svg viewBox="0 0 24 24"><use href="#lens" /><g fill="#4566a0"><circle cx="21" cy="5" r="2.500" /><circle cx="19" cy="1" r="1" /><circle cx="23" cy="1" r="1" /><circle cx="3" cy="20" r="2.500" /><circle cx="7" cy="17" r="1.500" /><circle cx="7" cy="22" r="1.500" /><circle cx="2" cy="16" r="1" /></g></svg></button>
      </div>
    </main>

    <footer class="statusbar">
      <p class="message">Iestata projekta īpašības</p>
      <button class="status-button" aria-label="Pele"><svg viewBox="0 0 20 20"><use href="#mouse" /></svg></button>
      <output class="cell coord">-2897754,7289633</output>
      <label class="cell scale" for="scale">Mērogs</label>
      <input id="scale" type="text" value="1:121371039">
      <button class="status-button" aria-label="Apturēt"><svg viewBox="0 0 20 20"><circle cx="10" cy="10" r="8" fill="#a51418" stroke="#550c0e" stroke-width="1.500" /><path d="M7 6l6 8M13 6l-6 8" stroke="#fff" stroke-width="2" /></svg></button>
      <label class="cell render" for="render"><input id="render" type="checkbox" checked>Renderēt</label>
      <button class="status-button" aria-label="Projekcija"><svg viewBox="0 0 20 20"><path d="M2 2l4 3 9-1v12H2z" fill="#3d97dc" /><path d="M3 10h10M6 6v9M10 6v9" stroke="#8ccbf2" /><circle cx="14" cy="14" r="4.500" fill="#5bad43" /><path d="M12 14l2 2 3-4" fill="none" stroke="#fff" stroke-width="1.500" /></svg></button>
      <svg class="size-grip" viewBox="0 0 14 14"><path d="M1 14L14 1M5 14l9-9M9 14l5-5" stroke="#fff" stroke-width="2" /><path d="M2 14L14 2M6 14l8-8M10 14l4-4" stroke="#8a8882" stroke-width="1.500" /></svg>
    </footer>
  </div>
</body>

</html>
```
FILE: styles.css
```css
* {
  box-sizing: border-box;
}

body {
  margin: 0;
  font-family: "DejaVu Sans Condensed", "DejaVu Sans", sans-serif;
  font-size: 11px;
  color: #000;
  background-color: #d4d0c8;
}

button,
input {
  font: inherit;
  color: inherit;
}

button {
  display: flex;
  align-items: center;
  justify-content: center;
  padding: 0;
  border: none;
  background: none;
}

button:disabled {
  color: inherit;
}

svg {
  display: block;
  flex: none;
}

.sprite {
  position: absolute;
  width: 0;
  height: 0;
}

.window {
  display: flex;
  flex-direction: column;
  height: 100vh;
  padding: 1px 2px 1px 4px;
  border-top: 1px solid #d4d0c8;
  border-bottom: 2px solid #55534f;
  box-shadow: inset 1px 1px #fff;
}

/* title bar */
.titlebar {
  display: flex;
  align-items: center;
  height: 18px;
  margin-top: 2px;
  padding: 0 2px 0 3px;
  background: linear-gradient(90deg, #0a246a, #a6caf0);
  color: #fff;
}

.app-icon {
  width: 14px;
  height: 16px;
}

.titlebar h1 {
  flex: 1;
  margin: 0 0 0 2px;
  font-size: 11px;
  font-weight: bold;
}

.window-buttons {
  display: flex;
}

.window-buttons button {
  width: 16px;
  height: 14px;
  background-color: #d4d0c8;
  border: 1px solid;
  border-color: #fff #404040 #404040 #fff;
  box-shadow: inset -1px -1px #808080;
}

.window-buttons svg {
  width: 12px;
  height: 10px;
}

.window-buttons .close {
  margin-left: 2px;
}

/* menu */
.menubar {
  display: flex;
  gap: 1px;
  height: 26px;
  padding: 4px 4px 2px;
}

.menubar > button,
.menu-holder > button {
  height: 19px;
  padding: 0 5px;
  border: 1px solid transparent;
}

.menu-holder {
  position: relative;
}

.menu-holder > .open {
  background-color: #bfbbb3;
  border-color: #8b8983;
}

.menu {
  position: absolute;
  z-index: 2;
  top: 20px;
  left: 2px;
  width: 165px;
  background-color: #dbd8d1;
  border: 1px solid #777570;
}

.menu-item {
  width: 100%;
  height: 22px;
  padding: 0 14px 0 0;
}

.menu-item svg {
  width: 18px;
  height: 18px;
}

.menu-item span {
  flex: 1;
  margin-left: 6px;
  text-align: left;
}

.menu-item kbd {
  font: inherit;
}

.menu-item.active {
  background-color: #0a246a;
  color: #fff;
}

.pointer {
  position: absolute;
  z-index: 3;
  top: 33px;
  left: 125px;
  width: 13px;
  height: 21px;
}

/* main toolbar */
.toolbar {
  display: flex;
  align-items: center;
  height: 40px;
  border-top: 1px solid #a3a19b;
  border-bottom: 1px solid #a3a19b;
  box-shadow: inset 0 1px #e9e6e0;
}

.toolbar button {
  flex: none;
  width: 35px;
  height: 34px;
}

.toolbar svg,
.side-toolbar svg {
  width: 24px;
  height: 24px;
}

.grip {
  flex: none;
  width: 21px;
  height: 30px;
  background:
    linear-gradient(#fff 2px, transparent 2px) 15px 0 / 2px 6px repeat-y,
    linear-gradient(#a7a49d 1px, transparent 1px) 16px 2px / 2px 6px repeat-y,
    linear-gradient(#fff 2px, transparent 2px) 18px 3px / 2px 6px repeat-y,
    linear-gradient(#a7a49d 1px, transparent 1px) 19px 5px / 2px 6px repeat-y;
}

.grip.first {
  width: 11px;
  background-position: 5px 0, 6px 2px, 8px 3px, 9px 5px;
}

.grip.short {
  width: 15px;
  background-position: 9px 0, 10px 2px, 12px 3px, 13px 5px;
}

.hidden-gap {
  flex: none;
  width: 13px;
}

.grip-h {
  flex: none;
  width: 30px;
  height: 6px;
  background:
    linear-gradient(90deg, #fff 2px, transparent 2px) 0 0 / 6px 2px repeat-x,
    linear-gradient(90deg, #a7a49d 1px, transparent 1px) 1px 2px / 6px 1px repeat-x,
    linear-gradient(90deg, #fff 2px, transparent 2px) 3px 3px / 6px 2px repeat-x,
    linear-gradient(90deg, #a7a49d 1px, transparent 1px) 4px 5px / 6px 1px repeat-x;
}

/* workspace */
.workspace {
  display: flex;
  flex: 1;
  min-height: 0;
}

.side-toolbar {
  display: flex;
  flex-direction: column;
  align-items: center;
  flex: none;
  width: 40px;
  padding-top: 6px;
  border-right: 1px solid #a3a19b;
}

.side-toolbar .grip-h {
  margin-bottom: 1px;
}

.side-toolbar button {
  flex: none;
  width: 34px;
  height: 34px;
}

.side-toolbar .mid {
  margin: 8px 0 1px;
}

.side-toolbar .pressed {
  background-color: #bdb9b1;
  border: 1px solid #7d7b76;
  border-radius: 3px;
}

.left {
  width: 39px;
}

.left hr {
  width: 31px;
  margin: 0;
  border: none;
  border-top: 1px solid #a3a19b;
  border-bottom: 1px solid #fff;
}

.home-text {
  font-size: 7px;
  font-weight: bold;
}

.dxf {
  font-family: "Liberation Serif", serif;
  font-size: 15px;
}

.dxf.small {
  font-size: 13px;
}

.gdal {
  font-size: 8px;
  font-weight: bold;
}

/* docks */
.docks {
  display: flex;
  flex-direction: column;
  flex: none;
  width: 259px;
  padding: 0 3px 0 1px;
}

.dock-title {
  display: flex;
  align-items: center;
  gap: 1px;
  height: 17px;
  padding-left: 3px;
}

.dock-title h2 {
  flex: none;
  margin: 0 8px;
  font-size: 10px;
  font-weight: normal;
}

.dock-title .grip-h {
  flex: 1;
  margin-right: 2px;
}

.dock-title button {
  width: 14px;
  height: 14px;
  border: 1px solid #777570;
  border-radius: 3px;
}

.dock-title svg {
  width: 12px;
  height: 12px;
}

.legend {
  display: flex;
  flex-direction: column;
  height: 331px;
}

.legend .dock-title {
  height: 20px;
}

.tree {
  flex: 1;
  margin: 0;
  padding: 0;
  list-style: none;
  background-color: #fff;
  border: 2px solid #2b4080;
  border-radius: 2px;
}

.row {
  display: flex;
  align-items: center;
  height: 16px;
}

.branch {
  width: 26px;
  height: 16px;
}

.twig {
  width: 41px;
  height: 16px;
}

input[type="checkbox"] {
  flex: none;
  appearance: none;
  width: 13px;
  height: 13px;
  margin: 0;
  border: 1px solid #aaa;
  background:
    linear-gradient(45deg, transparent 36%, #000 36%, #000 64%, transparent 64%) center / 8px 8px no-repeat,
    linear-gradient(-45deg, transparent 36%, #000 36%, #000 64%, transparent 64%) center / 8px 8px no-repeat,
    #fff;
}

.layer {
  width: 16px;
  height: 16px;
  margin: 0 3px;
}

.row label {
  flex: 1;
  height: 16px;
  padding-left: 2px;
  border: 1px solid transparent;
  font-family: "Liberation Sans", sans-serif;
  font-size: 13px;
  font-weight: bold;
  line-height: 16px;
}

.patch {
  width: 14px;
  height: 14px;
  margin-left: 2px;
}

.green { fill: #0f0; }
.gray { fill: #c0c0c0; }
.peach { fill: #ffaf85; }
.blue { fill: #5ab0ff; }

.selected {
  background-color: #0a246a;
  color: #fff;
}

.selected .layer {
  filter: brightness(0.6);
}

.selected label {
  border: 1px dotted #f0d890;
}

.splitter {
  flex: none;
  align-self: center;
  width: 84px;
  height: 6px;
  background: linear-gradient(90deg, #fff 2px, #a7a49d 2px, #a7a49d 3px, transparent 3px) 0 2px / 5px 2px repeat-x;
}

.overview {
  flex: 1;
}

.coord-form {
  display: grid;
  grid-template-columns: 26px 1fr;
  grid-auto-rows: 26px;
  align-items: center;
  gap: 6px 20px;
  padding: 12px 8px 11px 9px;
}

.coord-form input {
  width: 100%;
  height: 20px;
  border: 1px solid #8f8d87;
  border-radius: 3px;
  background-color: #fff;
}

.square,
.copy {
  width: 26px;
  height: 25px;
  border: 1px solid #807e79;
  border-radius: 3px;
}

.square svg {
  width: 18px;
  height: 18px;
}

.grid-icon {
  width: 22px;
  height: 22px;
}

.copy {
  width: 100%;
  background: linear-gradient(#d6d3cb, #bebab2);
}

.v-splitter {
  flex: none;
  width: 4px;
  background: linear-gradient(#fff 2px, #a7a49d 2px, #a7a49d 3px, transparent 3px) 1px 0 / 2px 5px repeat-y;
  background-clip: content-box;
  padding: 207px 0 212px;
}

.map {
  flex: 1;
  min-width: 0;
  overflow: hidden;
  margin-top: 1px;
  background-color: #fff;
  border: solid #8b8983;
  border-width: 1px 1px 1px 2px;
}

.map svg {
  width: 100%;
  height: 100%;
}

.map text {
  font-family: "DejaVu Sans Condensed", sans-serif;
  font-size: 12px;
}

/* status bar */
.statusbar {
  display: flex;
  align-items: center;
  gap: 3px;
  flex: none;
  height: 31px;
  padding-left: 6px;
  font-family: "DejaVu Sans", sans-serif;
}

.message {
  flex: 1;
  margin: 0;
}

.status-button {
  width: 22px;
  height: 22px;
  border: 1px solid #807e79;
  border-radius: 3px;
}

.status-button svg {
  width: 20px;
  height: 20px;
}

.cell {
  display: flex;
  align-items: center;
  justify-content: center;
  gap: 5px;
  height: 22px;
  border: 1px solid #8f8d87;
}

.coord {
  width: 122px;
}

.scale {
  width: 54px;
}

.render {
  width: 79px;
}

#scale {
  width: 104px;
  height: 22px;
  padding: 0 4px;
  border: 2px solid #9a9892;
  border-radius: 2px;
  background-color: #fff;
}

.size-grip {
  align-self: flex-end;
  width: 14px;
  height: 14px;
}
```
